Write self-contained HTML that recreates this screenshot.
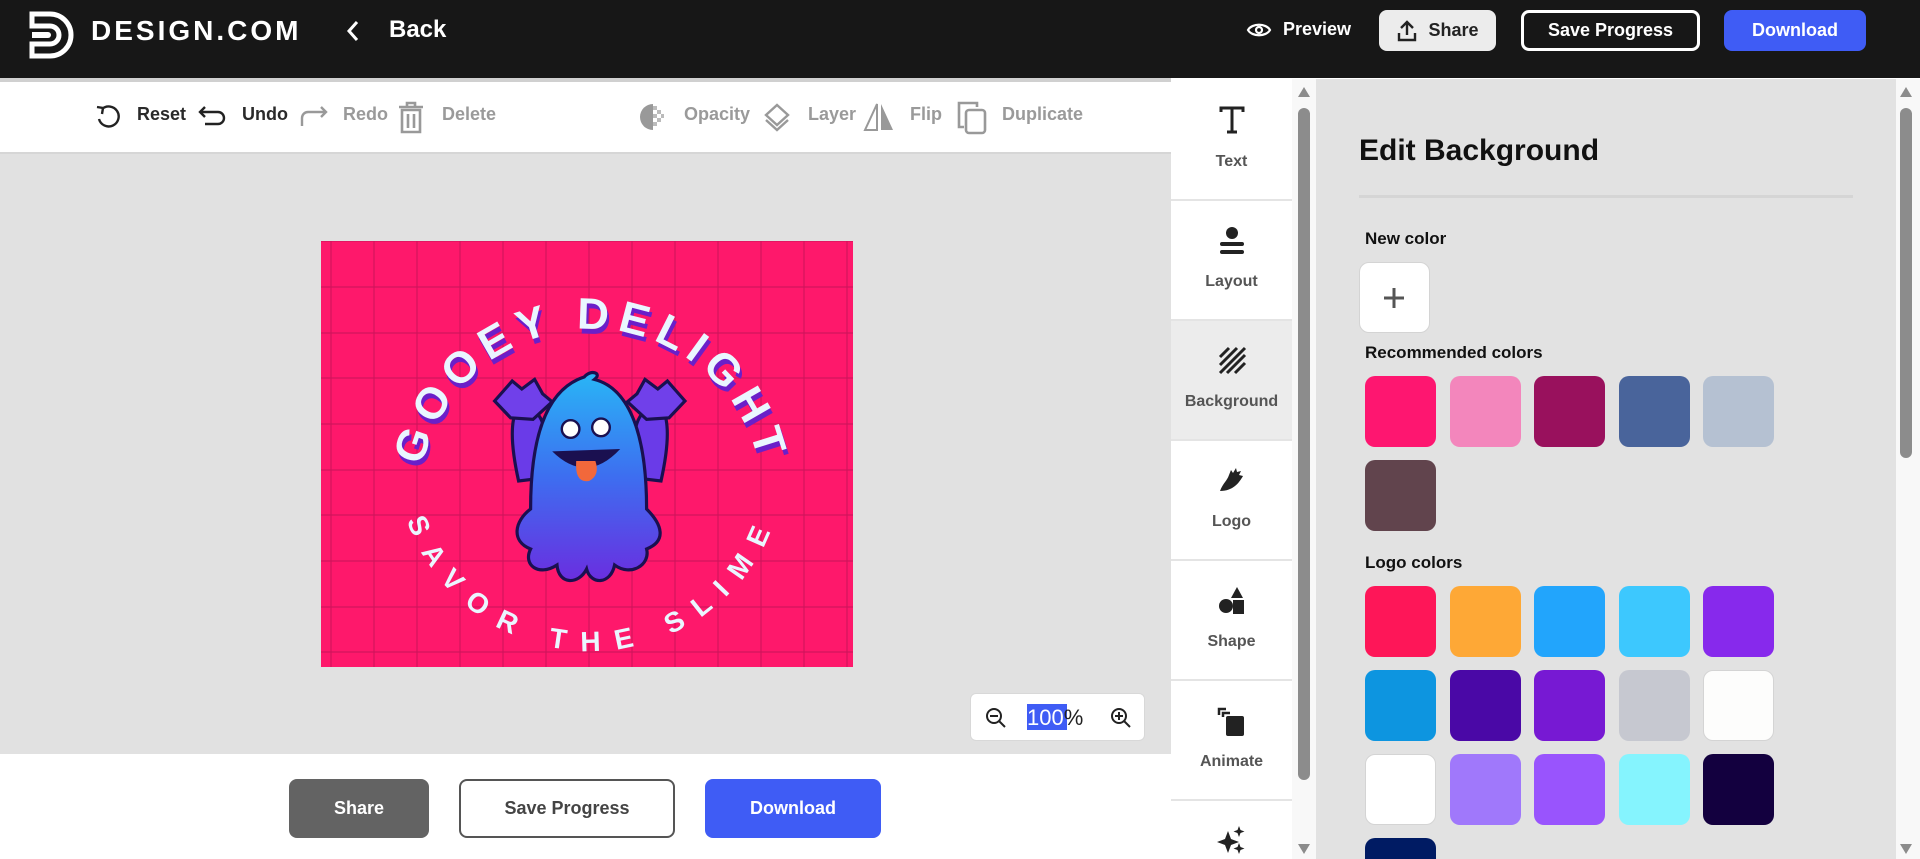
<!DOCTYPE html>
<html><head><meta charset="utf-8"><style>
*{box-sizing:border-box;margin:0;padding:0}
html,body{width:1920px;height:859px;overflow:hidden}
body{font-family:"Liberation Sans",sans-serif;background:#fff;position:relative}
.abs{position:absolute}
.hdr{left:0;top:0;width:1920px;height:78px;background:#171717}
.btn{position:absolute;display:flex;align-items:center;justify-content:center;font-weight:bold;border-radius:8px;font-size:18px}
.tb{top:104px;font-size:18px;font-weight:bold;color:#2a2a2a}
.tb.g{color:#9a9a9a}
.side{left:1171px;top:79px;width:121px;height:780px;background:#fff;overflow:hidden}
.si{position:absolute;left:0;width:121px;height:120px;border-bottom:2px solid #e4e4e4;text-align:center;font-size:16px;font-weight:bold;color:#555}
.si svg{position:absolute;left:46px;top:24px}
.si span{position:absolute;left:0;right:0;top:72px}
.sw{position:absolute;width:71px;height:71px;border-radius:10px}
.lbl{position:absolute;left:1365px;font-size:17px;font-weight:bold;color:#111}
.rp{left:1316px;top:79px;width:580px;height:780px;background:#e2e2e2;overflow:hidden}
</style></head><body>
<div class="abs hdr"></div>
<svg class="abs" style="left:28px;top:10px" width="46" height="50" viewBox="0 0 46 50"><path d="M4 4h18a20 20 0 0 1 0 42H4V34h18a9 9 0 0 0 0-18H4z" fill="none" stroke="#fff" stroke-width="5"/><path d="M4 22h16a3 3 0 0 1 0 6H4z" fill="#fff"/></svg>
<div class="abs" style="left:91px;top:15px;color:#fff;font-size:28px;font-weight:bold;letter-spacing:3px">DESIGN.COM</div>
<svg class="abs" style="left:345px;top:19px" width="16" height="24"><path d="M12 3L4 12l8 9" stroke="#fff" stroke-width="3" fill="none"/></svg>
<div class="abs" style="left:389px;top:16px;color:#fff;font-size:24px;font-weight:bold">Back</div>
<svg class="abs" style="left:1246px;top:20px" width="26" height="20" viewBox="0 0 26 20"><path d="M2 10C6 3 20 3 24 10C20 17 6 17 2 10z" fill="none" stroke="#fff" stroke-width="2.2"/><circle cx="13" cy="10" r="3" fill="none" stroke="#fff" stroke-width="2.2"/></svg>
<div class="abs" style="left:1283px;top:19px;color:#fff;font-size:18px;font-weight:bold">Preview</div>
<div class="btn" style="left:1379px;top:10px;width:117px;height:41px;background:#ececec;color:#222">
<svg width="22" height="24" style="margin-right:10px" viewBox="0 0 22 24"><path d="M11 16V3M5 9l6-6 6 6M3 14v7h16v-7" stroke="#222" stroke-width="2.4" fill="none"/></svg>Share</div>
<div class="btn" style="left:1521px;top:10px;width:179px;height:41px;border:3px solid #fff;color:#fff">Save Progress</div>
<div class="btn" style="left:1724px;top:10px;width:142px;height:41px;background:#3f5cf5;color:#fff">Download</div>

<div class="abs" style="left:0;top:78px;width:1171px;height:4px;background:#d0d0d0"></div>
<div class="abs" style="left:0;top:152px;width:1171px;height:2px;background:#d6d6d6"></div>
<svg class="abs" style="left:94px;top:103px" width="28" height="28" viewBox="0 0 28 28"><path d="M8 6A10 10 0 1 1 5 16" stroke="#222" stroke-width="2.4" fill="none"/><path d="M3 4l6 1-1 6" stroke="#222" stroke-width="2.4" fill="none"/></svg>
<div class="abs tb" style="left:137px">Reset</div>
<svg class="abs" style="left:197px;top:104px" width="32" height="26" viewBox="0 0 32 26"><path d="M8 3L3 8l5 5M3 8h18a6 6 0 0 1 0 12H8" stroke="#222" stroke-width="2.4" fill="none"/></svg>
<div class="abs tb" style="left:242px">Undo</div>
<svg class="abs" style="left:297px;top:104px" width="32" height="26" viewBox="0 0 32 26"><path d="M24 3l5 5-5 5M29 8H11a6 6 0 0 0-6 6v8" stroke="#999" stroke-width="2.4" fill="none"/></svg>
<div class="abs tb g" style="left:343px">Redo</div>
<svg class="abs" style="left:396px;top:100px" width="30" height="34" viewBox="0 0 30 34"><path d="M3 7h24M11 7V3h8v4M6 10h18v22H6zM12 14v14M18 14v14" stroke="#999" stroke-width="2.6" fill="none"/></svg>
<div class="abs tb g" style="left:442px">Delete</div>
<svg class="abs" style="left:638px;top:102px" width="30" height="30" viewBox="0 0 30 30"><path d="M15 2a13 13 0 0 0 0 26z" fill="#999"/><g fill="#bbb"><rect x="15" y="4" width="4" height="4"/><rect x="19" y="8" width="4" height="4"/><rect x="15" y="12" width="4" height="4"/><rect x="19" y="16" width="4" height="4"/><rect x="15" y="20" width="4" height="4"/><rect x="23" y="12" width="3" height="4"/></g></svg>
<div class="abs tb g" style="left:684px">Opacity</div>
<svg class="abs" style="left:762px;top:102px" width="30" height="30" viewBox="0 0 30 30"><path d="M15 3l11 10-11 10L4 13z" stroke="#999" stroke-width="2.4" fill="none"/><path d="M4 18l11 10 11-10" stroke="#999" stroke-width="2.4" fill="none"/></svg>
<div class="abs tb g" style="left:808px">Layer</div>
<svg class="abs" style="left:862px;top:100px" width="34" height="32" viewBox="0 0 34 32"><path d="M15 4L3 30h12z" stroke="#999" stroke-width="2" fill="none"/><path d="M19 4l12 26H19z" fill="#999"/></svg>
<div class="abs tb g" style="left:910px">Flip</div>
<svg class="abs" style="left:955px;top:99px" width="34" height="36" viewBox="0 0 34 36"><path d="M9 28H4V4h18v4" stroke="#999" stroke-width="2.6" fill="none"/><rect x="11" y="11" width="19" height="23" rx="3" stroke="#999" stroke-width="2.6" fill="none"/></svg>
<div class="abs tb g" style="left:1002px">Duplicate</div>

<div class="abs" style="left:0;top:154px;width:1171px;height:600px;background:#e1e1e1"></div>
<svg class="abs" style="left:321px;top:241px" width="532" height="426" viewBox="0 0 532 426">
<defs>
<path id="top" d="M100 265A172 172 0 0 1 444 265"/>
<path id="bot" d="M95 215A172 172 0 0 0 445 215"/>
<linearGradient id="bl" x1="0" y1="0" x2="0" y2="1"><stop offset="0" stop-color="#29b6f6"/><stop offset="0.5" stop-color="#3d6ef0"/><stop offset="1" stop-color="#6a2ee0"/></linearGradient>
</defs>
<rect width="532" height="426" fill="#fe186b"/>
<g stroke="#c8145a" stroke-width="1.2" opacity="0.8">
<path d="M10 0V426M53 0V426M96 0V426M139 0V426M182 0V426M225 0V426M268 0V426M311 0V426M354 0V426M397 0V426M440 0V426M483 0V426M526 0V426"/>
<path d="M0 0H532M0 46H532M0 92H532M0 137H532M0 183H532M0 229H532M0 274H532M0 320H532M0 366H532M0 411H532"/>
</g>
<text font-family="Liberation Sans" font-weight="bold" font-size="44" fill="#6a1fc9" letter-spacing="8"><textPath href="#top" startOffset="50%" text-anchor="middle">GOOEY DELIGHT</textPath></text>
<g transform="translate(-2,-5)"><text font-family="Liberation Sans" font-weight="bold" font-size="44" fill="#eaf6ff" letter-spacing="8"><textPath href="#top" startOffset="50%" text-anchor="middle">GOOEY DELIGHT</textPath></text></g>
<text font-family="Liberation Sans" font-weight="bold" font-size="28" fill="#eaf6ff" letter-spacing="12"><textPath href="#bot" startOffset="50%" text-anchor="middle" dominant-baseline="hanging">SAVOR THE SLIME</textPath></text>
<g transform="translate(268,340) scale(0.8) translate(-268,-340)">
<g stroke="#1a1050" stroke-width="4">
<path d="M180 215C170 170 170 140 178 125C195 118 208 130 212 150L222 210z" fill="#6a3be8"/>
<path d="M358 215C368 170 368 140 360 125C343 118 330 130 326 150L316 210z" fill="#6a3be8"/>
<path d="M150 115l22-25 12 10 16-12 10 18 12 10-24 22-28-2z" fill="#7040ea"/>
<path d="M388 115l-22-25-12 10-16-12-10 18-12 10 24 22 28-2z" fill="#7040ea"/>
<path d="M195 250C195 160 215 100 262 85C270 75 285 80 275 88C320 100 340 160 340 250C360 270 365 290 340 300C345 320 320 335 300 320C295 345 270 345 265 325C255 345 230 345 228 320C205 335 185 320 195 300C170 290 175 265 195 250z" fill="url(#bl)"/>
</g>
<circle cx="245" cy="150" r="11" fill="#fff" stroke="#1a1050" stroke-width="3"/><circle cx="283" cy="148" r="11" fill="#fff" stroke="#1a1050" stroke-width="3"/>
<path d="M222 178Q265 220 307 175Z" fill="#1a1050"/>
<path d="M252 190Q250 218 268 215Q282 208 276 190z" fill="#f2683b"/>
</g>
</svg>
<div class="abs" style="left:970px;top:693px;width:175px;height:48px;background:#fff;border:1px solid #d8d8d8;border-radius:6px"></div>
<svg class="abs" style="left:985px;top:707px" width="22" height="22" viewBox="0 0 22 22"><circle cx="9" cy="9" r="7" stroke="#222" stroke-width="2" fill="none"/><path d="M5 9h8M14 14l6 6" stroke="#222" stroke-width="2"/></svg>
<div class="abs" style="left:1027px;top:704px;height:26px;width:40px;background:#3f5cf5"></div>
<div class="abs" style="left:1027px;top:705px;font-size:22px;color:#fff">100<span style="color:#222">%</span></div>
<svg class="abs" style="left:1110px;top:707px" width="22" height="22" viewBox="0 0 22 22"><circle cx="9" cy="9" r="7" stroke="#222" stroke-width="2" fill="none"/><path d="M5 9h8M9 5v8M14 14l6 6" stroke="#222" stroke-width="2"/></svg>
<div class="btn" style="left:289px;top:779px;width:140px;height:59px;background:#636363;color:#fff">Share</div>
<div class="btn" style="left:459px;top:779px;width:216px;height:59px;border:2px solid #555;color:#444">Save Progress</div>
<div class="btn" style="left:705px;top:779px;width:176px;height:59px;background:#3f5cf5;color:#fff">Download</div>

<div class="abs side">
<div class="si" style="top:2px"><svg width="30" height="30" viewBox="0 0 30 30"><path d="M4 7V3h22v4M15 3v24M10 27h10" stroke="#222" stroke-width="3" fill="none"/></svg><span>Text</span></div>
<div class="si" style="top:122px"><svg width="30" height="34" viewBox="0 0 30 34"><circle cx="15" cy="8" r="6" fill="#222"/><rect x="3" y="17" width="24" height="4" rx="2" fill="#222"/><rect x="3" y="25" width="24" height="4" rx="2" fill="#222"/></svg><span>Layout</span></div>
<div class="si" style="top:242px;background:#ececec"><svg width="30" height="30" viewBox="0 0 30 30"><path d="M3 12L12 3M3 20L20 3M3 28L28 3M10 28L28 10M18 28L28 18" stroke="#222" stroke-width="3"/></svg><span>Background</span></div>
<div class="si" style="top:362px"><svg width="30" height="30" viewBox="0 0 30 30"><path d="M3 26C6 18 10 16 12 10L14 5 16 8 19 3 20 7 24 6 22 10 26 11C22 18 16 26 3 26z" fill="#222"/></svg><span>Logo</span></div>
<div class="si" style="top:482px"><svg width="30" height="32" viewBox="0 0 30 32"><path d="M20 2l6 11H14z" fill="#222"/><circle cx="9" cy="21" r="7" fill="#222"/><rect x="16" y="15" width="11" height="14" fill="#222"/></svg><span>Shape</span></div>
<div class="si" style="top:602px"><svg width="30" height="34" viewBox="0 0 30 34"><path d="M2 10V4h7M6 12V8h7" stroke="#222" stroke-width="2.5" fill="none"/><rect x="9" y="11" width="18" height="20" rx="2" fill="#222"/></svg><span>Animate</span></div>
<div class="si" style="top:722px;height:58px;border:none"><svg width="30" height="30" viewBox="0 0 30 30"><path d="M11 6l3 8 8 3-8 3-3 8-3-8-8-3 8-3zM22 1l1.5 4 4 1.5-4 1.5L22 12l-1.5-4-4-1.5 4-1.5zM22 18l1.5 4 4 1.5-4 1.5L22 29l-1.5-4-4-1.5 4-1.5z" fill="#222"/></svg></div>
</div>
<div class="abs" style="left:1292px;top:79px;width:24px;height:780px;background:#f8f8f8"></div>
<div class="abs" style="left:1298px;top:108px;width:12px;height:672px;background:#8c8c8c;border-radius:6px"></div>
<svg class="abs" style="left:1297px;top:86px" width="14" height="12"><path d="M7 1L13 11H1z" fill="#8c8c8c"/></svg>
<svg class="abs" style="left:1297px;top:843px" width="14" height="12"><path d="M7 11L13 1H1z" fill="#8c8c8c"/></svg>

<div class="abs rp">
<div class="abs" style="left:43px;top:55px;font-size:30px;font-weight:bold;color:#111">Edit Background</div>
<div class="abs" style="left:43px;top:116px;width:494px;height:3px;background:#d5d5d5"></div>
<div class="lbl" style="left:49px;top:150px">New color</div>
<div class="sw" style="left:43px;top:183px;background:#fff;border:1px solid #d4d4d4"></div>
<svg class="abs" style="left:66px;top:207px" width="24" height="24"><path d="M12 2v20M2 12h20" stroke="#555" stroke-width="3"/></svg>
<div class="lbl" style="left:49px;top:264px">Recommended colors</div>
<div class="sw" style="left:49px;top:297px;background:#fe1670"></div>
<div class="sw" style="left:134px;top:297px;background:#f386bc"></div>
<div class="sw" style="left:218px;top:297px;background:#99115d"></div>
<div class="sw" style="left:303px;top:297px;background:#49649b"></div>
<div class="sw" style="left:387px;top:297px;background:#b5c1d2"></div>
<div class="sw" style="left:49px;top:381px;background:#61444d"></div>
<div class="lbl" style="left:49px;top:474px">Logo colors</div>
<div class="sw" style="left:49px;top:507px;background:#fe1658"></div>
<div class="sw" style="left:134px;top:507px;background:#fea836"></div>
<div class="sw" style="left:218px;top:507px;background:#22a5fc"></div>
<div class="sw" style="left:303px;top:507px;background:#3dc8fe"></div>
<div class="sw" style="left:387px;top:507px;background:#8729ec"></div>
<div class="sw" style="left:49px;top:591px;background:#0d95e0"></div>
<div class="sw" style="left:134px;top:591px;background:#4a08a6"></div>
<div class="sw" style="left:218px;top:591px;background:#7719d3"></div>
<div class="sw" style="left:303px;top:591px;background:#c6c8d0"></div>
<div class="sw" style="left:387px;top:591px;background:#fdfdfc;border:1px solid #d4d4d4"></div>
<div class="sw" style="left:49px;top:675px;background:#fff;border:1px solid #d4d4d4"></div>
<div class="sw" style="left:134px;top:675px;background:#a078fb"></div>
<div class="sw" style="left:218px;top:675px;background:#9954fd"></div>
<div class="sw" style="left:303px;top:675px;background:#85f4fe"></div>
<div class="sw" style="left:387px;top:675px;background:#13003f"></div>
<div class="sw" style="left:49px;top:759px;height:21px;border-radius:10px 10px 0 0;background:#001b63"></div>
</div>
<div class="abs" style="left:1896px;top:79px;width:24px;height:780px;background:#f8f8f8"></div>
<div class="abs" style="left:1900px;top:108px;width:12px;height:350px;background:#8c8c8c;border-radius:6px"></div>
<svg class="abs" style="left:1899px;top:86px" width="14" height="12"><path d="M7 1L13 11H1z" fill="#8c8c8c"/></svg>
<svg class="abs" style="left:1899px;top:843px" width="14" height="12"><path d="M7 11L13 1H1z" fill="#8c8c8c"/></svg>
</body></html>
